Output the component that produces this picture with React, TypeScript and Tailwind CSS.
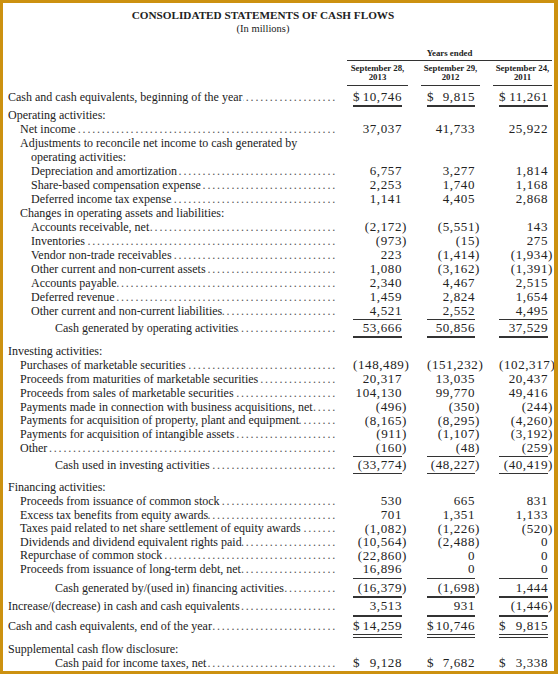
import React from "react";

type Vals = [string, string, string];
type Item =
  | { k: "row"; label: string; indent: number; vals?: Vals; dollar?: boolean; dots?: boolean; gap?: string; h?: string }
  | { k: "rule"; h: string; dbl?: boolean }
  | { k: "space"; h: string };

const INDENT: Record<number, string> = {
  0: "pl-[5px]",
  1: "pl-[17px]",
  2: "pl-[28px]",
  3: "pl-[52px]",
};

const CELL = [
  "w-[61px] pl-[6px] pr-[2px]",
  "ml-[13px] w-[59px] pl-[6px] pr-[1px]",
  "ml-[13px] w-[59px] pl-[6px]",
];
const HEAD = ["w-[61px]", "ml-[13px] w-[59px]", "ml-[13px] w-[59px]"];

const F = "h-[13.6px]";

const items: Item[] = [
  { k: "row", label: "Cash and cash equivalents, beginning of the year", indent: 0, vals: ["10,746", "9,815", "11,261"], dollar: true },
  { k: "rule", h: "h-[4px]" },
  { k: "row", label: "Operating activities:", indent: 0, dots: false },
  { k: "row", label: "Net income", indent: 1, vals: ["37,037", "41,733", "25,922"] },
  { k: "row", label: "Adjustments to reconcile net income to cash generated by", indent: 1, dots: false },
  { k: "row", label: "operating activities:", indent: 2, dots: false },
  { k: "row", label: "Depreciation and amortization", indent: 2, vals: ["6,757", "3,277", "1,814"] },
  { k: "row", label: "Share-based compensation expense", indent: 2, vals: ["2,253", "1,740", "1,168"] },
  { k: "row", label: "Deferred income tax expense", indent: 2, vals: ["1,141", "4,405", "2,868"] },
  { k: "row", label: "Changes in operating assets and liabilities:", indent: 1, dots: false },
  { k: "row", label: "Accounts receivable, net", indent: 2, vals: ["(2,172)", "(5,551)", "143"], gap: "pl-[10px]" },
  { k: "row", label: "Inventories", indent: 2, vals: ["(973)", "(15)", "275"] },
  { k: "row", label: "Vendor non-trade receivables", indent: 2, vals: ["223", "(1,414)", "(1,934)"], gap: "pl-[10px]" },
  { k: "row", label: "Other current and non-current assets", indent: 2, vals: ["1,080", "(3,162)", "(1,391)"] },
  { k: "row", label: "Accounts payable", indent: 2, vals: ["2,340", "4,467", "2,515"] },
  { k: "row", label: "Deferred revenue", indent: 2, vals: ["1,459", "2,824", "1,654"], gap: "pl-[8px]" },
  { k: "row", label: "Other current and non-current liabilities", indent: 2, vals: ["4,521", "2,552", "4,495"], gap: "pl-[8px]" },
  { k: "rule", h: "h-[3px]" },
  { k: "row", label: "Cash generated by operating activities", indent: 3, vals: ["53,666", "50,856", "37,529"] },
  { k: "rule", h: "h-[4px]" },
  { k: "space", h: "h-[5px]" },
  { k: "row", label: "Investing activities:", indent: 0, dots: false },
  { k: "row", label: "Purchases of marketable securities", indent: 1, vals: ["(148,489)", "(151,232)", "(102,317)"] },
  { k: "row", label: "Proceeds from maturities of marketable securities", indent: 1, vals: ["20,317", "13,035", "20,437"], gap: "pl-[8px]", h: "h-[13.8px]" },
  { k: "row", label: "Proceeds from sales of marketable securities", indent: 1, vals: ["104,130", "99,770", "49,416"], h: "h-[13.8px]" },
  { k: "row", label: "Payments made in connection with business acquisitions, net", indent: 1, vals: ["(496)", "(350)", "(244)"], gap: "pl-[8px]", h: "h-[13.8px]" },
  { k: "row", label: "Payments for acquisition of property, plant and equipment", indent: 1, vals: ["(8,165)", "(8,295)", "(4,260)"], gap: "pl-[8px]", h: "h-[13.8px]" },
  { k: "row", label: "Payments for acquisition of intangible assets", indent: 1, vals: ["(911)", "(1,107)", "(3,192)"], gap: "pl-[8px]", h: "h-[13.8px]" },
  { k: "row", label: "Other", indent: 1, vals: ["(160)", "(48)", "(259)"], h: "h-[13.8px]" },
  { k: "rule", h: "h-[3px]" },
  { k: "row", label: "Cash used in investing activities", indent: 3, vals: ["(33,774)", "(48,227)", "(40,419)"], gap: "pl-[10px]" },
  { k: "rule", h: "h-[3.5px]" },
  { k: "space", h: "h-[5px]" },
  { k: "row", label: "Financing activities:", indent: 0, dots: false },
  { k: "row", label: "Proceeds from issuance of common stock", indent: 1, vals: ["530", "665", "831"], h: F },
  { k: "row", label: "Excess tax benefits from equity awards", indent: 1, vals: ["701", "1,351", "1,133"], h: F },
  { k: "row", label: "Taxes paid related to net share settlement of equity awards", indent: 1, vals: ["(1,082)", "(1,226)", "(520)"], gap: "pl-[8px]", h: F },
  { k: "row", label: "Dividends and dividend equivalent rights paid", indent: 1, vals: ["(10,564)", "(2,488)", "0"], gap: "pl-[8px]", h: F },
  { k: "row", label: "Repurchase of common stock", indent: 1, vals: ["(22,860)", "0", "0"], gap: "pl-[8px]", h: F },
  { k: "row", label: "Proceeds from issuance of long-term debt, net", indent: 1, vals: ["16,896", "0", "0"], gap: "pl-[8px]", h: F },
  { k: "rule", h: "h-[5px]" },
  { k: "row", label: "Cash generated by/(used in) financing activities", indent: 3, vals: ["(16,379)", "(1,698)", "1,444"], gap: "pl-[8px]" },
  { k: "rule", h: "h-[4px]" },
  { k: "row", label: "Increase/(decrease) in cash and cash equivalents", indent: 0, vals: ["3,513", "931", "(1,446)"] },
  { k: "rule", h: "h-[6px]" },
  { k: "row", label: "Cash and cash equivalents, end of the year", indent: 0, vals: ["14,259", "10,746", "9,815"], dollar: true, gap: "pl-[8px]" },
  { k: "rule", h: "h-[7px]", dbl: true },
  { k: "space", h: "h-[2.4px]" },
  { k: "row", label: "Supplemental cash flow disclosure:", indent: 0, dots: false },
  { k: "row", label: "Cash paid for income taxes, net", indent: 3, vals: ["9,128", "7,682", "3,338"], dollar: true },
];

const DOTS = ".".repeat(80);

function Num({ v, dollar, i }: { v: string; dollar?: boolean; i: number }) {
  const neg = v.endsWith(")");
  const body = neg ? v.slice(0, -1) : v;
  return (
    <div className={`flex shrink-0 items-center ${CELL[i]}`}>
      <div className={`flex flex-1 items-center ${dollar ? "justify-between" : "justify-end"}`}>
        {dollar && <span>$</span>}
        <span className="whitespace-nowrap">{body}</span>
      </div>
      <div className="w-[4px] shrink-0 overflow-visible whitespace-nowrap">{neg ? ")" : ""}</div>
    </div>
  );
}

function Row({ it }: { it: Extract<Item, { k: "row" }> }) {
  const dots = it.dots !== false && !!it.vals;
  return (
    <div className={`flex items-center ${it.h ?? "h-[14px]"}`}>
      <div className={`flex w-[344px] shrink-0 items-center pr-[10px] text-[12px] ${INDENT[it.indent]}`}>
        <span className="shrink-0 whitespace-nowrap">{it.label}</span>
        {dots && (
          <div className={`flex min-w-0 flex-1 justify-end overflow-hidden ${it.gap ?? "pl-[3px]"}`}>
            <span className="shrink-0 whitespace-nowrap text-[12px] tracking-[1.8px] text-[#555]">{DOTS}</span>
          </div>
        )}
      </div>
      {it.vals && (
        <div className="flex text-[13px] tracking-[0.6px]">
          {it.vals.map((v, i) => (
            <Num key={i} v={v} dollar={it.dollar} i={i} />
          ))}
        </div>
      )}
    </div>
  );
}

function Rule({ h, dbl }: { h: string; dbl?: boolean }) {
  return (
    <div className={`flex ${h} ${dbl ? "items-start pt-[1px]" : "items-center"}`}>
      <div className="w-[344px] shrink-0" />
      {[0, 1, 2].map((i) => (
        <div key={i} className={`flex shrink-0 ${CELL[i]}`}>
          <div className="flex-1">
            {dbl ? (
              <div className="h-[4.5px] border-y-[1.2px] border-[#333]" />
            ) : (
              <div className="h-[1.5px] bg-[#333]" />
            )}
          </div>
          <div className="w-[4px] shrink-0" />
        </div>
      ))}
    </div>
  );
}

export default function App() {
  return (
    <div className="h-[674px] w-[558px] overflow-hidden border-[3px] border-r-4 border-[#cc9110] bg-white font-['Liberation_Serif','Times_New_Roman',serif] text-[#222]">
      <div className="w-[520px] pt-[6px] text-center">
        <div className="text-[11.2px] font-bold leading-[13px]">CONSOLIDATED STATEMENTS OF CASH FLOWS</div>
        <div className="text-[10.5px] leading-[13px]">(In millions)</div>
      </div>

      <div className="mt-[13px] flex">
        <div className="w-[344px] shrink-0" />
        <div className="w-[205px]">
          <div className="border-b-[1.5px] border-[#333] pb-[1px] text-center text-[8.8px] font-bold leading-[11px]">
            Years ended
          </div>
          <div className="mt-[3px] flex">
            {[
              ["September 28,", "2013"],
              ["September 29,", "2012"],
              ["September 24,", "2011"],
            ].map(([a, b], i) => (
              <div
                key={i}
                className={`shrink-0 border-b-[1.5px] border-[#333] pb-[3px] text-center text-[8.8px] font-bold leading-[9px] ${HEAD[i]}`}
              >
                <div className="whitespace-nowrap">{a}</div>
                <div>{b}</div>
              </div>
            ))}
          </div>
        </div>
      </div>

      <div className="mt-[4px]">
        {items.map((it, idx) => {
          if (it.k === "row") return <Row key={idx} it={it} />;
          if (it.k === "rule") return <Rule key={idx} h={it.h} dbl={it.dbl} />;
          return <div key={idx} className={it.h} />;
        })}
      </div>
    </div>
  );
}
